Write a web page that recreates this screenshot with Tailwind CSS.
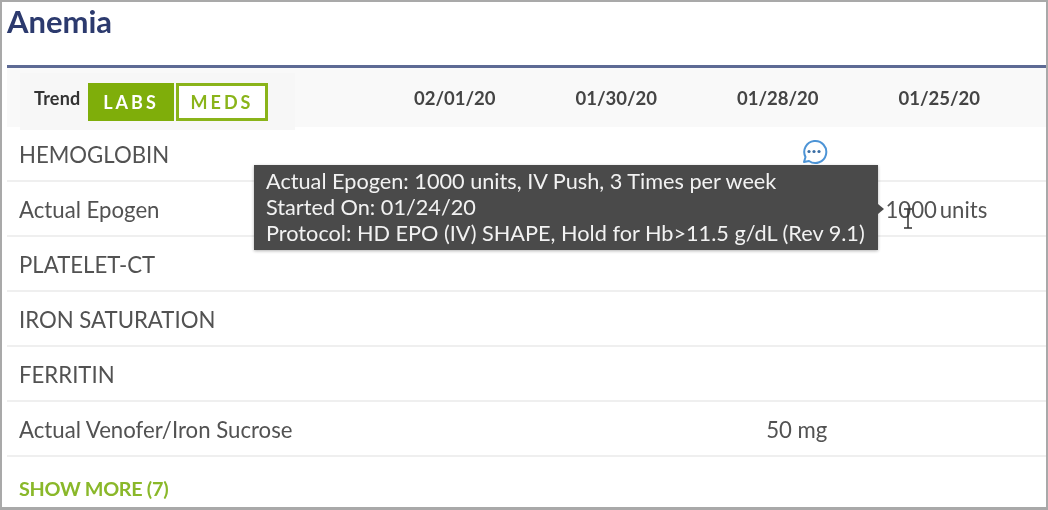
<!DOCTYPE html>
<html>
<head>
<script src="https://cdn.jsdelivr.net/npm/@tailwindcss/browser@4"></script>
</head>
<body class="bg-white">
<div class="relative w-[1048px] h-[510px] overflow-hidden border-2 border-b-[3px] border-[#a9a9a9] bg-white font-['Lato','Open_Sans',sans-serif] text-[#525252]">
  <h1 class="h-[63px] pl-[5px] pt-[1px] text-[31px] leading-[36px] font-bold text-[#2c3a6e] blur-[0.5px]">Anemia</h1>
  <div class="ml-[5px] border-t-[3px] border-[#5d6a94]">
    <div class="h-[59px] bg-[#f9f9f9] grid grid-cols-[367px_161.5px_161.5px_161.5px_161.5px] items-center relative">
      <div class="flex items-start self-start ml-[13px] mt-[5px] w-[275px] h-[57px] pl-[14px] bg-[#f7f7f7]">
        <span class="mt-[12px] w-[49px] text-[18px] leading-[26px] font-bold text-[#333] tracking-[0.2px] mr-[5px] blur-[0.4px]">Trend</span>
        <span class="mt-[10px] w-[86px] h-[38px] bg-[#7fae0a] text-white text-[18px] font-bold tracking-[3px] flex items-center justify-center blur-[0.3px]">LABS</span>
        <span class="mt-[10px] ml-[2px] w-[92px] h-[38px] bg-white text-[#8ab41a] text-[18px] font-bold tracking-[3px] flex items-center justify-center border-[3px] border-[#8ab41a] blur-[0.3px]">MEDS</span>
      </div>
      <span class="text-center text-[18.5px] font-bold text-[#444] blur-[0.4px]">02/01/20</span>
      <span class="text-center text-[18.5px] font-bold text-[#444] blur-[0.4px]">01/30/20</span>
      <span class="text-center text-[18.5px] font-bold text-[#444] blur-[0.4px]">01/28/20</span>
      <span class="text-center text-[18.5px] font-bold text-[#444] blur-[0.4px]">01/25/20</span>
    </div>
    <div class="text-[22.2px] blur-[0.5px]">
      <div class="h-[55px] pt-[2px] border-b-2 border-[#efefef] flex items-center pl-[12px]">HEMOGLOBIN</div>
      <div class="h-[55px] pt-[2px] border-b-2 border-[#efefef] grid grid-cols-[367px_161.5px_161.5px_161.5px_161.5px] items-center pl-[12px]">
        <span>Actual Epogen</span><span></span><span></span><span></span>
        <span class="ml-[15px] whitespace-nowrap [word-spacing:-3px]">1000 units</span>
      </div>
      <div class="h-[55px] pt-[2px] border-b-2 border-[#efefef] flex items-center pl-[12px]">PLATELET-CT</div>
      <div class="h-[55px] pt-[2px] border-b-2 border-[#efefef] flex items-center pl-[12px]">IRON SATURATION</div>
      <div class="h-[55px] pt-[2px] border-b-2 border-[#efefef] flex items-center pl-[12px]">FERRITIN</div>
      <div class="h-[55px] pt-[2px] border-b-2 border-[#efefef] grid grid-cols-[367px_161.5px_161.5px_161.5px_161.5px] items-center pl-[12px]">
        <span class="whitespace-nowrap">Actual Venofer/Iron Sucrose</span><span></span><span></span>
        <span class="text-center ml-[14px]">50 mg</span>
      </div>
      <div class="pl-[12px] pt-[19px] text-[19.8px] leading-[24px] font-bold text-[#8ab82a] tracking-[-0.3px]">SHOW MORE (7)</div>
    </div>
  </div>

  <svg class="absolute left-[798px] top-[136px] w-[28px] h-[28px]" viewBox="0 0 28 28" fill="none">
    <path d="M4 24 L5.5 19 A11 11 0 1 1 9 23 Z" stroke="#4d94d6" stroke-width="2" fill="#fff" stroke-linejoin="round"/>
    <circle cx="9" cy="13.5" r="1.6" fill="#3a6ea5"/><circle cx="14" cy="13.5" r="1.6" fill="#3a6ea5"/><circle cx="19" cy="13.5" r="1.6" fill="#3a6ea5"/>
  </svg>

  <div class="absolute left-[252px] top-[163px] w-[624px] h-[85px] bg-[#4a4a4a] text-[#f2f2f2] text-[21.7px] leading-[26px] pl-[12px] pt-[3px] whitespace-nowrap shadow-[0_1px_3px_rgba(0,0,0,0.3)] blur-[0.4px]">
    <div>Actual Epogen: 1000 units, IV Push, 3 Times per week</div>
    <div>Started On: 01/24/20</div>
    <div>Protocol: HD EPO (IV) SHAPE, Hold for Hb&gt;11.5 g/dL (Rev 9.1)</div>
  </div>
  <div class="absolute left-[876px] top-[202px] w-0 h-0 border-y-[5px] border-y-transparent border-l-[6px] border-l-[#4a4a4a]"></div>
  <svg class="absolute left-[900px] top-[206px] w-[12px] h-[22px]" viewBox="0 0 12 22" fill="none" stroke="#333" stroke-width="1.5"><path d="M2 1H10M6 1V20M2 20H10"/></svg>
</div>
</body>
</html>
